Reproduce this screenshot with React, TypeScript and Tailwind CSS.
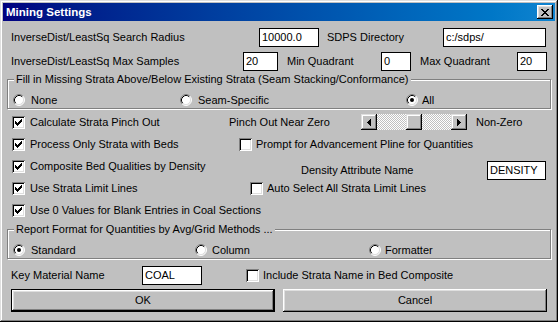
import React from "react"

function CheckMark() {
  // 7x7 classic check bitmap
  const rows = ["......X", ".....XX", "X...XXX", "XX.XXX.", "XXXXX..", ".XXX...", "..X...."]
  return (
    <svg width="7" height="7" viewBox="0 0 7 7" shapeRendering="crispEdges">
      {rows.map((r, y) =>
        r.split("").map((c, x) => (c === "X" ? <rect key={`${x}-${y}`} x={x} y={y} width="1" height="1" fill="#000" /> : null))
      )}
    </svg>
  )
}

function Check({ checked = false }: { checked?: boolean }) {
  return (
    <div className="w-[13px] h-[13px] shrink-0 bg-white flex items-center justify-center shadow-[inset_1px_1px_#808080,inset_-1px_-1px_#ffffff,inset_2px_2px_#000000,inset_-2px_-2px_#dfdfdf]">
      {checked && <CheckMark />}
    </div>
  )
}

function Radio({ checked = false }: { checked?: boolean }) {
  return (
    <svg width="12" height="12" viewBox="0 0 12 12" className="shrink-0">
      <circle cx="6" cy="6" r="5" fill="#fff" />
      <path d="M2.11 9.89 A5.5 5.5 0 0 1 9.89 2.11" stroke="#808080" fill="none" />
      <path d="M9.89 2.11 A5.5 5.5 0 0 1 2.11 9.89" stroke="#ffffff" fill="none" />
      <path d="M2.82 9.18 A4.5 4.5 0 0 1 9.18 2.82" stroke="#000000" fill="none" />
      <path d="M9.18 2.82 A4.5 4.5 0 0 1 2.82 9.18" stroke="#dfdfdf" fill="none" />
      {checked && <circle cx="6" cy="6" r="2" fill="#000" />}
    </svg>
  )
}

function TextBox({ value, className }: { value: string; className: string }) {
  return (
    <div className={`h-[19px] shrink-0 border border-black bg-white pl-[2px] flex items-center ${className}`}>
      {value}
    </div>
  )
}

function Arrow({ dir }: { dir: "left" | "right" }) {
  return (
    <div className="w-[16px] h-[16px] shrink-0 bg-[#c0c0c0] flex items-center justify-center shadow-[inset_-1px_-1px_#000000,inset_1px_1px_#dfdfdf,inset_-2px_-2px_#808080,inset_2px_2px_#ffffff]">
      <svg width="4" height="7" viewBox="0 0 4 7" shapeRendering="crispEdges">
        {dir === "left" ? <polygon points="4,0 0,3.5 4,7" fill="#000" /> : <polygon points="0,0 4,3.5 0,7" fill="#000" />}
      </svg>
    </div>
  )
}

function Slider() {
  return (
    <div className="w-[106px] h-[16px] shrink-0 flex">
      <Arrow dir="left" />
      <div className="flex-1 flex bg-[repeating-conic-gradient(#c0c0c0_0%_25%,#ffffff_0%_50%)] bg-[length:2px_2px]">
        <div className="ml-[29px] w-[16px] h-[16px] bg-[#c0c0c0] shadow-[inset_-1px_-1px_#000000,inset_1px_1px_#dfdfdf,inset_-2px_-2px_#808080,inset_2px_2px_#ffffff]" />
      </div>
      <Arrow dir="right" />
    </div>
  )
}

function CloseGlyph() {
  const rows = ["XX....XX", ".XX..XX.", "..XXXX..", "...XX...", "..XXXX..", ".XX..XX.", "XX....XX"]
  return (
    <svg width="8" height="7" viewBox="0 0 8 7" shapeRendering="crispEdges">
      {rows.map((r, y) =>
        r.split("").map((c, x) => (c === "X" ? <rect key={`${x}-${y}`} x={x} y={y} width="1" height="1" fill="#000" /> : null))
      )}
    </svg>
  )
}

export default function App() {
  return (
    <div className="w-[558px] h-[322px] p-[3px] bg-[#c0c0c0] text-black text-[11px] leading-[13px] font-['Liberation_Sans',Arial,sans-serif] shadow-[inset_-1px_-1px_#000000,inset_1px_1px_#dfdfdf,inset_-2px_-2px_#808080,inset_2px_2px_#ffffff] overflow-hidden">
      {/* Title bar */}
      <div className="h-[18px] flex items-center justify-between pl-[3px] pr-[2px] bg-gradient-to-r from-[#000080] to-[#1084d0]">
        <span className="text-white font-bold text-[11.5px]">Mining Settings</span>
        <div className="w-[16px] h-[14px] bg-[#c0c0c0] flex items-center justify-center shadow-[inset_-1px_-1px_#000000,inset_1px_1px_#ffffff,inset_-2px_-2px_#808080,inset_2px_2px_#dfdfdf]">
          <CloseGlyph />
        </div>
      </div>

      {/* Body */}
      <div className="flex flex-col">
        <div className="mt-[7px] h-[19px] flex items-center">
          <span className="ml-[8px] w-[248px] shrink-0">InverseDist/LeastSq Search Radius</span>
          <TextBox value="10000.0" className="w-[60px]" />
          <span className="ml-[8px] w-[116px] shrink-0">SDPS Directory</span>
          <TextBox value="c:/sdps/" className="w-[103px]" />
        </div>

        <div className="mt-[5px] h-[19px] flex items-center">
          <span className="ml-[8px] w-[232px] shrink-0">InverseDist/LeastSq Max Samples</span>
          <TextBox value="20" className="w-[35px]" />
          <span className="ml-[9px] w-[94px] shrink-0">Min Quadrant</span>
          <TextBox value="0" className="w-[30px]" />
          <span className="ml-[9px] w-[97px] shrink-0">Max Quadrant</span>
          <TextBox value="20" className="w-[30px]" />
        </div>

        <fieldset className="mt-[2px] ml-[4px] w-[544px] h-[36px] p-0 border border-[#808080] shadow-[inset_1px_1px_#ffffff,1px_1px_#ffffff]">
          <legend className="ml-[6px] px-[2px] bg-[#c0c0c0] leading-[13px]">
            Fill in Missing Strata Above/Below Existing Strata (Seam Stacking/Conformance)
          </legend>
          <div className="mt-[6px] h-[16px] flex items-center">
            <div className="ml-[5px] w-[167px] shrink-0 flex items-center gap-[6px]">
              <Radio />
              <span>None</span>
            </div>
            <div className="w-[226px] shrink-0 flex items-center gap-[6px]">
              <Radio />
              <span>Seam-Specific</span>
            </div>
            <div className="flex items-center gap-[4px]">
              <Radio checked />
              <span>All</span>
            </div>
          </div>
        </fieldset>

        <div className="mt-[2px] flex flex-col">
          <div className="h-[22px] flex items-center">
            <div className="ml-[9px] w-[217px] shrink-0 flex items-center gap-[5px]">
              <Check checked />
              <span>Calculate Strata Pinch Out</span>
            </div>
            <span className="w-[132px] shrink-0">Pinch Out Near Zero</span>
            <Slider />
            <span className="ml-[9px]">Non-Zero</span>
          </div>

          <div className="h-[22px] flex items-center">
            <div className="ml-[9px] w-[227px] shrink-0 flex items-center gap-[5px]">
              <Check checked />
              <span>Process Only Strata with Beds</span>
            </div>
            <div className="flex items-center gap-[4px]">
              <Check />
              <span>Prompt for Advancement Pline for Quantities</span>
            </div>
          </div>

          <div className="h-[22px] flex items-center">
            <div className="ml-[9px] w-[289px] shrink-0 flex items-center gap-[5px]">
              <Check checked />
              <span>Composite Bed Qualities by Density</span>
            </div>
            <div className="mt-[9px] flex items-center">
              <span className="w-[186px] shrink-0">Density Attribute Name</span>
              <TextBox value="DENSITY" className="w-[59px]" />
            </div>
          </div>

          <div className="h-[22px] flex items-center">
            <div className="ml-[9px] w-[238px] shrink-0 flex items-center gap-[5px]">
              <Check checked />
              <span>Use Strata Limit Lines</span>
            </div>
            <div className="flex items-center gap-[4px]">
              <Check />
              <span>Auto Select All Strata Limit Lines</span>
            </div>
          </div>

          <div className="h-[22px] flex items-center">
            <div className="ml-[9px] flex items-center gap-[5px]">
              <Check checked />
              <span>Use 0 Values for Blank Entries in Coal Sections</span>
            </div>
          </div>
        </div>

        <fieldset className="mt-[2px] ml-[4px] w-[544px] h-[36px] p-0 border border-[#808080] shadow-[inset_1px_1px_#ffffff,1px_1px_#ffffff]">
          <legend className="ml-[6px] px-[2px] bg-[#c0c0c0] leading-[13px]">
            Report Format for Quantities by Avg/Grid Methods ...
          </legend>
          <div className="mt-[6px] h-[16px] flex items-center">
            <div className="ml-[5px] w-[182px] shrink-0 flex items-center gap-[6px]">
              <Radio checked />
              <span>Standard</span>
            </div>
            <div className="w-[174px] shrink-0 flex items-center gap-[5px]">
              <Radio />
              <span>Column</span>
            </div>
            <div className="flex items-center gap-[4px]">
              <Radio />
              <span>Formatter</span>
            </div>
          </div>
        </fieldset>

        <div className="mt-[7px] h-[19px] flex items-center">
          <span className="ml-[8px] w-[131px] shrink-0">Key Material Name</span>
          <TextBox value="COAL" className="w-[60px]" />
          <div className="ml-[44px] flex items-center gap-[4px]">
            <Check />
            <span>Include Strata Name in Bed Composite</span>
          </div>
        </div>

        <div className="mt-[4px] h-[23px] flex">
          <button className="ml-[8px] w-[264px] h-[23px] bg-[#c0c0c0] border border-black shadow-[inset_-1px_-1px_#000000,inset_1px_1px_#ffffff,inset_-2px_-2px_#808080,inset_2px_2px_#dfdfdf]">
            OK
          </button>
          <button className="ml-[8px] w-[264px] h-[23px] bg-[#c0c0c0] shadow-[inset_-1px_-1px_#000000,inset_1px_1px_#ffffff,inset_-2px_-2px_#808080,inset_2px_2px_#dfdfdf]">
            Cancel
          </button>
        </div>
      </div>
    </div>
  )
}
